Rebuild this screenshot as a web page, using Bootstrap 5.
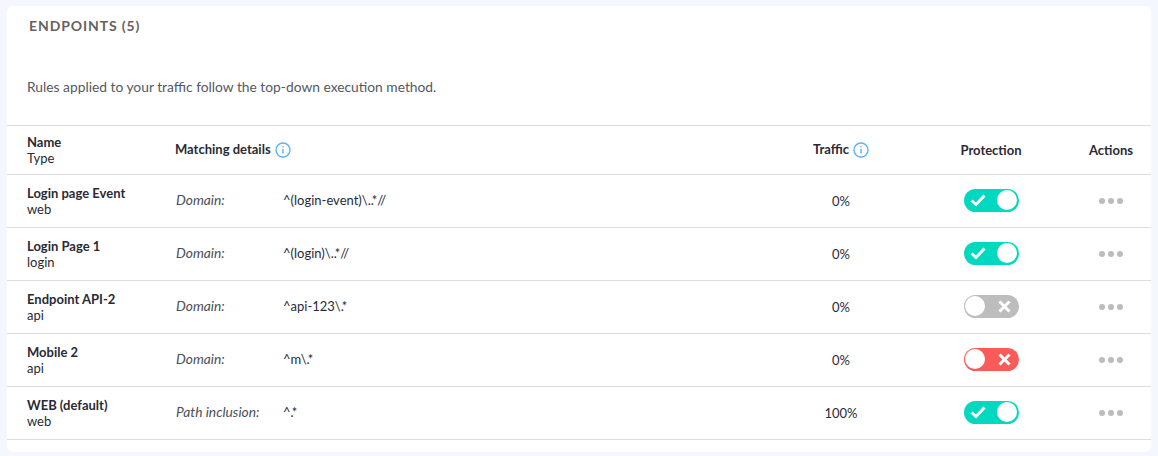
<!DOCTYPE html>
<html lang="en">
  <head>
    <meta charset="UTF-8" />
    <meta name="viewport" content="width=device-width, initial-scale=1.0" />
    <title>Endpoints</title>
    <link
      rel="stylesheet"
      href="https://cdn.jsdelivr.net/npm/bootstrap@5.3.0/dist/css/bootstrap.min.css"
    />
    <style>
      body {
        background: #f4f7fd;
        font-family: Lato, "Liberation Sans", sans-serif;
        font-size: 13px;
        color: #2a2a35;
        padding: 6px 7px 4px;
        height: 456px;
        overflow: hidden;
      }
      .panel {
        height: 446px;
        border: 0;
        border-radius: 6px;
        background: #fff;
      }
      .panel-title {
        margin: 0;
        padding: 11px 22px 0;
        height: 68px;
        font-size: 14px;
        line-height: 17px;
        font-weight: 700;
        letter-spacing: 0.9px;
        color: #66625f;
      }
      .panel-intro {
        margin: 0;
        padding: 0 20px;
        height: 51px;
        font-size: 13.8px;
        line-height: 26px;
        color: #555860;
      }
      .ep-table {
        table-layout: fixed;
        margin: 0;
        border-top: 1px solid #dedede;
        color: #2a2a35;
      }
      .ep-table th,
      .ep-table td {
        padding: 0;
        border-bottom: 1px solid #dedede;
        vertical-align: middle;
        font-size: 13px;
        line-height: 16px;
        color: #2a2a35;
      }
      .ep-table thead tr { height: 49px; }
      .ep-table tbody tr { height: 53px; }
      .ep-table th { font-weight: 700; }
      .ep-table th.head-up { padding-bottom: 2px; }
      .ep-table td.cell-kind {
        font-size: 13.8px;
        font-style: italic;
        color: #4b4f58;
        padding: 0 0 2px 1px;
      }
      .ep-table td.cell-rule,
      .ep-table td.cell-switch { padding-bottom: 2px; }
      .tight-dot { letter-spacing: -2px; }
      .cell-name { padding-left: 20px !important; }
      .col-name { width: 168px; }
      .col-kind { width: 108px; }
      .col-traffic { width: 140px; }
      .col-prot { width: 160px; }
      .col-act { width: 80px; }
      .ep-name { font-weight: 700; display: block; }
      .ep-type { display: block; font-weight: 400; }
      .info-ico { width: 16px; height: 16px; vertical-align: -4px; margin-left: 1px; }
      .switcher {
        width: 55px;
        height: 23px;
        border-radius: 12px;
        padding: 1.5px;
      }
      .sw-on { background: #00d9c0; }
      .sw-off { background: #bdbdbd; }
      .sw-block { background: #fb5a5a; }
      .sw-knob { width: 20px; height: 20px; border-radius: 50%; background: #fff; }
      .sw-check { width: 16px; height: 16px; margin-left: 5px; }
      .sw-cross { width: 13px; height: 13px; margin-right: 6px; }
      .dots { gap: 3px; }
      .dots span { width: 6px; height: 6px; border-radius: 50%; background: #bdbbbb; }
    </style>
  </head>
  <body>
    <div class="panel card">
      <h2 class="panel-title">ENDPOINTS (5)</h2>
      <p class="panel-intro">Rules applied to your traffic follow the top-down execution method.</p>
      <table class="table ep-table" id="ep-table">
        <colgroup>
          <col class="col-name" />
          <col class="col-kind" />
          <col />
          <col class="col-traffic" />
          <col class="col-prot" />
          <col class="col-act" />
        </colgroup>
        <thead>
          <tr>
            <th class="cell-name"><span class="ep-name">Name</span><span class="ep-type">Type</span></th>
            <th colspan="2" class="head-up">
              Matching details
              <svg class="info-ico" viewBox="0 0 16 16" fill="none" stroke="#5ab4f5">
                <circle cx="8" cy="8" r="7" stroke-width="1.4" />
                <path d="M8 7v4.5" stroke-width="1.4" />
                <path d="M8 4.2v1.4" stroke-width="1.4" />
              </svg>
            </th>
            <th class="text-center head-up">
              Traffic
              <svg class="info-ico" viewBox="0 0 16 16" fill="none" stroke="#5ab4f5">
                <circle cx="8" cy="8" r="7" stroke-width="1.4" />
                <path d="M8 7v4.5" stroke-width="1.4" />
                <path d="M8 4.2v1.4" stroke-width="1.4" />
              </svg>
            </th>
            <th class="text-center">Protection</th>
            <th class="text-center">Actions</th>
          </tr>
        </thead>
        <tbody id="ep-rows"></tbody>
      </table>
    </div>

    <script
      type="text/javascript"
      src="https://cdn.jsdelivr.net/npm/bootstrap@5.3.0/dist/js/bootstrap.bundle.min.js"
    ></script>
    <script type="text/javascript">
      var endpoints = [
        { name: 'Login page Event', type: 'web', kind: 'Domain:', rule: '^(login-event)\\..*//', traffic: '0%', state: 'on' },
        { name: 'Login Page 1', type: 'login', kind: 'Domain:', rule: '^(login)\\..*//', traffic: '0%', state: 'on' },
        { name: 'Endpoint API-2', type: 'api', kind: 'Domain:', rule: '^api-123\\.*', traffic: '0%', state: 'off' },
        { name: 'Mobile 2', type: 'api', kind: 'Domain:', rule: '^m\\.*', traffic: '0%', state: 'block' },
        { name: 'WEB (default)', type: 'web', kind: 'Path inclusion:', rule: '^.*', traffic: '100%', state: 'on' },
      ];

      var check = '<svg class="sw-check" viewBox="0 0 16 16" fill="none" stroke="#fff" stroke-width="3"><path d="M1.5 8.5l4.5 4 8.5-9" /></svg>';
      var cross = '<svg class="sw-cross" viewBox="0 0 13 13" fill="none" stroke="#fff" stroke-width="3"><path d="M1.5 1.5l10 10M11.5 1.5l-10 10" /></svg>';
      var knob = '<span class="sw-knob"></span>';

      document.querySelector('#ep-rows').innerHTML = endpoints.map(function (ep) {
        var on = ep.state === 'on';
        var inner = on ? check + knob : knob + cross;
        // the dot sits right under the asterisk in these rules
        var rule = ep.rule.replace('.*', '<span class="tight-dot">.</span>*');
        return '<tr>' +
          '<td class="cell-name"><span class="ep-name">' + ep.name + '</span><span class="ep-type">' + ep.type + '</span></td>' +
          '<td class="cell-kind">' + ep.kind + '</td>' +
          '<td class="cell-rule">' + rule + '</td>' +
          '<td class="text-center">' + ep.traffic + '</td>' +
          '<td class="cell-switch"><div class="switcher sw-' + ep.state + ' d-flex align-items-center justify-content-between mx-auto">' + inner + '</div></td>' +
          '<td><div class="dots d-flex justify-content-center"><span></span><span></span><span></span></div></td>' +
          '</tr>';
      }).join('');
    </script>
  </body>
</html>
